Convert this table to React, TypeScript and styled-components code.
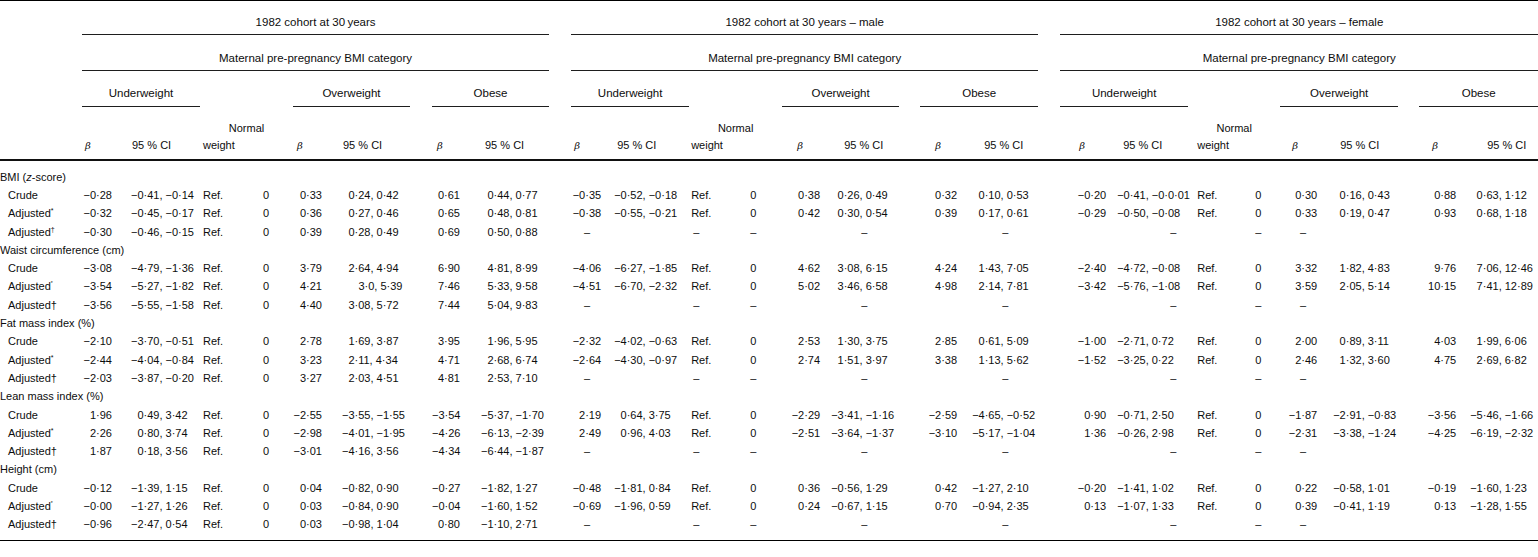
import React from 'react';
import styled, { createGlobalStyle } from 'styled-components';

const GlobalStyle = createGlobalStyle`
  html, body { margin: 0; padding: 0; background: #ffffff; }
  body { font-family: "Liberation Sans", Arial, Helvetica, sans-serif; color: #0d0d0d; }
`;

type Kind = 'beta' | 'ci' | 'ref' | 'zero';
interface ColSpec { kind: Kind; w: number; pad: number; head: number; dash?: number; }
interface Group { title: string; cols: ColSpec[]; gap: number; }

const LABEL_W = 82;
const GROUP_GAP = 22;

const groups: Group[] = [
  {
    title: '1982 cohort at 30\u2009years',
    cols: [
      { kind: 'beta', w: 40, pad: 10, head: 3 },
      { kind: 'ci', w: 78, pad: 9, head: 10 },
      { kind: 'ref', w: 46, pad: 3, head: 3 },
      { kind: 'zero', w: 47, pad: 17, head: 0 },
      { kind: 'beta', w: 37, pad: 8, head: 4 },
      { kind: 'ci', w: 80, pad: 12, head: 13 },
      { kind: 'beta', w: 38, pad: 10, head: 5 },
      { kind: 'ci', w: 79, pad: 11, head: 15 },
    ],
    gap: 22,
  },
  {
    title: '1982 cohort at 30 years \u2013 male',
    cols: [
      { kind: 'beta', w: 40, pad: 10, head: 3 },
      { kind: 'ci', w: 78, pad: 3, head: 6 },
      { kind: 'ref', w: 46, pad: 2, head: 2 },
      { kind: 'zero', w: 47, pad: 15, head: 0 },
      { kind: 'beta', w: 38, pad: 0, head: 15 },
      { kind: 'ci', w: 79, pad: 11, head: 24 },
      { kind: 'beta', w: 38, pad: 1, head: 15 },
      { kind: 'ci', w: 80, pad: 14, head: 26 },
    ],
    gap: 21,
  },
  {
    title: '1982 cohort at 30 years \u2013 female',
    cols: [
      { kind: 'beta', w: 50, pad: 4, head: 19 },
      { kind: 'ci', w: 78, pad: 7, head: 13, dash: 60 },
      { kind: 'ref', w: 46, pad: 9, head: 9 },
      { kind: 'zero', w: 46, pad: 21, head: 0 },
      { kind: 'beta', w: 40, pad: 3, head: 12 },
      { kind: 'ci', w: 78, pad: 13, head: 20 },
      { kind: 'beta', w: 41, pad: 4, head: 13 },
      { kind: 'ci', w: 78, pad: 10, head: 27 },
    ],
    gap: 21,
  },
];

type Mark = 'star' | 'tiny' | 'supDagger' | 'dagger';
interface Line { label?: string; mark?: Mark; cells?: string[] }
interface Section { title: React.ReactNode; lines: Line[] }

const D2 = '\u2013||\u2013|\u2013||\u2013||\u2013';
const D3 = '|\u2013||\u2013|\u2013|||';

const sections: Section[] = [
  {
    title: 'bmi',
    lines: [
      { label: 'Crude', cells: [
        '−0·28|−0·41, −0·14|Ref.|0|0·33|0·24, 0·42|0·61|0·44, 0·77',
        '−0·35|−0·52, −0·18|Ref.|0|0·38|0·26, 0·49|0·32|0·10, 0·53',
        '−0·20|−0·41, −0·0·01|Ref.|0|0·30|0·16, 0·43|0·88|0·63, 1·12'] },
      { label: 'Adjusted', mark: 'star', cells: [
        '−0·32|−0·45, −0·17|Ref.|0|0·36|0·27, 0·46|0·65|0·48, 0·81',
        '−0·38|−0·55, −0·21|Ref.|0|0·42|0·30, 0·54|0·39|0·17, 0·61',
        '−0·29|−0·50, −0·08|Ref.|0|0·33|0·19, 0·47|0·93|0·68, 1·18'] },
      { label: 'Adjusted', mark: 'supDagger', cells: [
        '−0·30|−0·46, −0·15|Ref.|0|0·39|0·28, 0·49|0·69|0·50, 0·88', D2, D3] },
    ],
  },
  {
    title: 'Waist circumference (cm)',
    lines: [
      { label: 'Crude', cells: [
        '−3·08|−4·79, −1·36|Ref.|0|3·79|2·64, 4·94|6·90|4·81, 8·99',
        '−4·06|−6·27, −1·85|Ref.|0|4·62|3·08, 6·15|4·24|1·43, 7·05',
        '−2·40|−4·72, −0·08|Ref.|0|3·32|1·82, 4·83|9·76|7·06, 12·46'] },
      { label: 'Adjusted', mark: 'tiny', cells: [
        '−3·54|−5·27, −1·82|Ref.|0|4·21|~3·0, 5·39|7·46|5·33, 9·58',
        '−4·51|−6·70, −2·32|Ref.|0|5·02|3·46, 6·58|4·98|2·14, 7·81',
        '−3·42|−5·76, −1·08|Ref.|0|3·59|2·05, 5·14|10·15|7·41, 12·89'] },
      { label: 'Adjusted', mark: 'dagger', cells: [
        '−3·56|−5·55, −1·58|Ref.|0|4·40|3·08, 5·72|7·44|5·04, 9·83', D2, D3] },
    ],
  },
  {
    title: 'Fat mass index (%)',
    lines: [
      { label: 'Crude', cells: [
        '−2·10|−3·70, −0·51|Ref.|0|2·78|1·69, 3·87|3·95|1·96, 5·95',
        '−2·32|−4·02, −0·63|Ref.|0|2·53|1·30, 3·75|2·85|0·61, 5·09',
        '−1·00|−2·71, 0·72|Ref.|0|2·00|0·89, 3·11|4·03|1·99, 6·06'] },
      { label: 'Adjusted', mark: 'star', cells: [
        '−2·44|−4·04, −0·84|Ref.|0|3·23|2·11, 4·34|4·71|2·68, 6·74',
        '−2·64|−4·30, −0·97|Ref.|0|2·74|1·51, 3·97|3·38|1·13, 5·62',
        '−1·52|−3·25, 0·22|Ref.|0|2·46|1·32, 3·60|4·75|2·69, 6·82'] },
      { label: 'Adjusted', mark: 'dagger', cells: [
        '−2·03|−3·87, −0·20|Ref.|0|3·27|2·03, 4·51|4·81|2·53, 7·10', D2, D3] },
    ],
  },
  {
    title: 'Lean mass index (%)',
    lines: [
      { label: 'Crude', cells: [
        '1·96|0·49, 3·42|Ref.|0|−2·55|−3·55, −1·55|−3·54|−5·37, −1·70',
        '2·19|0·64, 3·75|Ref.|0|−2·29|−3·41, −1·16|−2·59|−4·65, −0·52',
        '0·90|−0·71, 2·50|Ref.|0|−1·87|−2·91, −0·83|−3·56|−5·46, −1·66'] },
      { label: 'Adjusted', mark: 'star', cells: [
        '2·26|0·80, 3·74|Ref.|0|−2·98|−4·01, −1·95|−4·26|−6·13, −2·39',
        '2·49|0·96, 4·03|Ref.|0|−2·51|−3·64, −1·37|−3·10|−5·17, −1·04',
        '1·36|−0·26, 2·98|Ref.|0|−2·31|−3·38, −1·24|−4·25|−6·19, −2·32'] },
      { label: 'Adjusted', mark: 'dagger', cells: [
        '1·87|0·18, 3·56|Ref.|0|−3·01|−4·16, 3·56|−4·34|−6·44, −1·87', D2, D3] },
    ],
  },
  {
    title: 'Height (cm)',
    lines: [
      { label: 'Crude', cells: [
        '−0·12|−1·39, 1·15|Ref.|0|0·04|−0·82, 0·90|−0·27|−1·82, 1·27',
        '−0·48|−1·81, 0·84|Ref.|0|0·36|−0·56, 1·29|0·42|−1·27, 2·10',
        '−0·20|−1·41, 1·02|Ref.|0|0·22|−0·58, 1·01|−0·19|−1·60, 1·23'] },
      { label: 'Adjusted', mark: 'tiny', cells: [
        '−0·00|−1·27, 1·26|Ref.|0|0·03|−0·84, 0·90|−0·04|−1·60, 1·52',
        '−0·69|−1·96, 0·59|Ref.|0|0·24|−0·67, 1·15|0·70|−0·94, 2·35',
        '0·13|−1·07, 1·33|Ref.|0|0·39|−0·41, 1·19|0·13|−1·28, 1·55'] },
      { label: 'Adjusted', mark: 'dagger', cells: [
        '−0·96|−2·47, 0·54|Ref.|0|0·03|−0·98, 1·04|0·80|−1·10, 2·71', D2, D3] },
    ],
  },
];

const TOTAL_COLS = 1 + groups.length * 9 + (groups.length - 1);

/* ---------- styled parts ---------- */

const Page = styled.div`
  width: 1538px;
  background: #fff;
`;

const Sheet = styled.table`
  width: 1538px;
  table-layout: fixed;
  border-collapse: separate;
  border-spacing: 0;
  border-top: 1px solid #000;
  border-bottom: 1px solid #000;
  font-size: 11px;
  line-height: 13px;
`;

const Col = styled.col<{ $w: number }>`
  width: ${(p) => p.$w}px;
`;

const HeadRow = styled.tr<{ $h: number }>`
  height: ${(p) => p.$h}px;
`;

const HeadCell = styled.th<{ $line?: 'thin' | 'thick'; $pb: number; $pl?: number; $center?: boolean; $big?: boolean }>`
  font-weight: 400;
  font-size: ${(p) => (p.$big ? '11.5px' : '11px')};
  padding: 0 0 ${(p) => p.$pb}px ${(p) => p.$pl ?? 0}px;
  text-align: ${(p) => (p.$center ? 'center' : 'left')};
  vertical-align: bottom;
  white-space: nowrap;
  overflow: visible;
  border-bottom: ${(p) =>
    p.$line === 'thick' ? '2px solid #111' : p.$line === 'thin' ? '1px solid #1e1e1e' : '0'};
`;

const Beta = styled.i`
  font-family: "DejaVu Serif", "Liberation Serif", serif;
  font-size: 10px;
`;

const Spacer = styled.tr<{ $h: number }>`
  height: ${(p) => p.$h}px;
`;

const BodyRow = styled.tr`
  height: 18.3px;
`;

const Cell = styled.td<{ $align: 'left' | 'right' | 'center'; $pl?: number; $pr?: number }>`
  padding: 0 ${(p) => p.$pr ?? 0}px 0 ${(p) => p.$pl ?? 0}px;
  text-align: ${(p) => p.$align};
  vertical-align: middle;
  white-space: nowrap;
  overflow: visible;
`;

const SectionCell = styled.td`
  padding: 0;
  text-align: left;
  vertical-align: middle;
  white-space: nowrap;
`;

const MinusGap = styled.span`
  display: inline-block;
  width: 0.584em;
`;

const Sup = styled.sup<{ $tiny?: boolean }>`
  font-size: ${(p) => (p.$tiny ? 5 : 7)}px;
  line-height: 0;
  vertical-align: ${(p) => (p.$tiny ? 5 : 4)}px;
`;

/* ---------- helpers ---------- */

function dashCell(col: ColSpec, key: string) {
  const d = '\u2013';
  switch (col.kind) {
    case 'zero':
      return <Cell key={key} $align="left" $pl={col.pad}>{d}</Cell>;
    case 'ref':
      return <Cell key={key} $align="left" $pl={col.pad + 2}>{d}</Cell>;
    case 'beta':
      return <Cell key={key} $align="right" $pr={col.pad + 11}>{d}</Cell>;
    default:
      return <Cell key={key} $align="left" $pl={col.dash ?? col.pad + 30}>{d}</Cell>;
  }
}

function dataCell(col: ColSpec, raw: string, key: string) {
  if (raw === '') return <Cell key={key} $align="left" />;
  if (raw === '\u2013') return dashCell(col, key);
  if (col.kind === 'beta') return <Cell key={key} $align="right" $pr={col.pad}>{raw}</Cell>;
  if (col.kind === 'ci') {
    const shifted = raw.startsWith('~');
    const text = shifted ? raw.slice(1) : raw;
    const neg = text.startsWith('−');
    return (
      <Cell key={key} $align="left" $pl={col.pad + (shifted ? 10 : 0)}>
        {!neg && <MinusGap />}
        {text}
      </Cell>
    );
  }
  return <Cell key={key} $align="left" $pl={col.pad}>{raw}</Cell>;
}

function labelFor(line: Line) {
  return (
    <>
      {line.label}
      {line.mark === 'star' && <Sup>*</Sup>}
      {line.mark === 'tiny' && <Sup $tiny>*</Sup>}
      {line.mark === 'supDagger' && <Sup>†</Sup>}
      {line.mark === 'dagger' && '†'}
    </>
  );
}

function sectionTitle(t: React.ReactNode) {
  if (t === 'bmi') return <>BMI (<i>z</i>-score)</>;
  return t;
}

export default function App() {
  const headRows = [
    { h: 34, pb: 5 },
    { h: 36, pb: 5 },
    { h: 36, pb: 6 },
    { h: 29, pb: 1 },
    { h: 25, pb: 7 },
  ];

  return (
    <Page>
      <GlobalStyle />
      <Sheet>
        <colgroup>
          <Col $w={LABEL_W} />
          {groups.map((g, gi) => (
            <React.Fragment key={gi}>
              {g.cols.slice(0, 6).map((c, ci) => <Col key={ci} $w={c.w} />)}
              <Col $w={g.gap} />
              {g.cols.slice(6).map((c, ci) => <Col key={'o' + ci} $w={c.w} />)}
              {gi < groups.length - 1 && <Col $w={GROUP_GAP} />}
            </React.Fragment>
          ))}
        </colgroup>
        <thead>
          <HeadRow $h={headRows[0].h}>
            <HeadCell $pb={headRows[0].pb} />
            {groups.map((g, gi) => (
              <React.Fragment key={gi}>
                <HeadCell colSpan={9} $center $big $line="thin" $pb={headRows[0].pb}>{g.title}</HeadCell>
                {gi < groups.length - 1 && <HeadCell $pb={0} />}
              </React.Fragment>
            ))}
          </HeadRow>
          <HeadRow $h={headRows[1].h}>
            <HeadCell $pb={headRows[1].pb} />
            {groups.map((g, gi) => (
              <React.Fragment key={gi}>
                <HeadCell colSpan={9} $center $big $line="thin" $pb={headRows[1].pb}>
                  Maternal pre-pregnancy BMI category
                </HeadCell>
                {gi < groups.length - 1 && <HeadCell $pb={0} />}
              </React.Fragment>
            ))}
          </HeadRow>
          <HeadRow $h={headRows[2].h}>
            <HeadCell $pb={headRows[2].pb} />
            {groups.map((g, gi) => (
              <React.Fragment key={gi}>
                <HeadCell colSpan={2} $center $big $line="thin" $pb={headRows[2].pb}>Underweight</HeadCell>
                <HeadCell colSpan={2} $pb={headRows[2].pb} />
                <HeadCell colSpan={2} $center $big $line="thin" $pb={headRows[2].pb}>Overweight</HeadCell>
                <HeadCell $pb={0} />
                <HeadCell colSpan={2} $center $big $line="thin" $pb={headRows[2].pb}>Obese</HeadCell>
                {gi < groups.length - 1 && <HeadCell $pb={0} />}
              </React.Fragment>
            ))}
          </HeadRow>
          <HeadRow $h={headRows[3].h}>
            <HeadCell $pb={headRows[3].pb} />
            {groups.map((g, gi) => (
              <React.Fragment key={gi}>
                <HeadCell colSpan={2} $pb={headRows[3].pb} />
                <HeadCell colSpan={2} $center $pb={headRows[3].pb}>Normal</HeadCell>
                <HeadCell colSpan={5} $pb={headRows[3].pb} />
                {gi < groups.length - 1 && <HeadCell $pb={0} />}
              </React.Fragment>
            ))}
          </HeadRow>
          <HeadRow $h={headRows[4].h}>
            <HeadCell $line="thick" $pb={headRows[4].pb} />
            {groups.map((g, gi) => {
              const c = g.cols;
              const pb = headRows[4].pb;
              return (
                <React.Fragment key={gi}>
                  <HeadCell $line="thick" $pb={pb} $pl={c[0].head}><Beta>β</Beta></HeadCell>
                  <HeadCell $line="thick" $pb={pb} $pl={c[1].head}>95 % CI</HeadCell>
                  <HeadCell colSpan={2} $line="thick" $pb={pb} $pl={c[2].head}>weight</HeadCell>
                  <HeadCell $line="thick" $pb={pb} $pl={c[4].head}><Beta>β</Beta></HeadCell>
                  <HeadCell $line="thick" $pb={pb} $pl={c[5].head}>95 % CI</HeadCell>
                  <HeadCell $line="thick" $pb={pb} />
                  <HeadCell $line="thick" $pb={pb} $pl={c[6].head}><Beta>β</Beta></HeadCell>
                  <HeadCell $line="thick" $pb={pb} $pl={c[7].head}>95 % CI</HeadCell>
                  {gi < groups.length - 1 && <HeadCell $line="thick" $pb={pb} />}
                </React.Fragment>
              );
            })}
          </HeadRow>
        </thead>
        <tbody>
          <Spacer $h={7}><td colSpan={TOTAL_COLS} /></Spacer>
          {sections.map((s, si) => (
            <React.Fragment key={si}>
              <BodyRow>
                <SectionCell colSpan={TOTAL_COLS}>{sectionTitle(s.title)}</SectionCell>
              </BodyRow>
              {s.lines.map((line, li) => (
                <BodyRow key={li}>
                  <Cell $align="left" $pl={8}>{labelFor(line)}</Cell>
                  {groups.map((g, gi) => {
                    const vals = (line.cells?.[gi] ?? '').split('|');
                    while (vals.length < 8) vals.push('');
                    return (
                      <React.Fragment key={gi}>
                        {g.cols.slice(0, 6).map((c, ci) => dataCell(c, vals[ci], `${gi}-${ci}`))}
                        <Cell $align="left" />
                        {g.cols.slice(6).map((c, ci) => dataCell(c, vals[ci + 6], `${gi}-o${ci}`))}
                        {gi < groups.length - 1 && <Cell $align="left" />}
                      </React.Fragment>
                    );
                  })}
                </BodyRow>
              ))}
            </React.Fragment>
          ))}
          <Spacer $h={6}><td colSpan={TOTAL_COLS} /></Spacer>
        </tbody>
      </Sheet>
    </Page>
  );
}
